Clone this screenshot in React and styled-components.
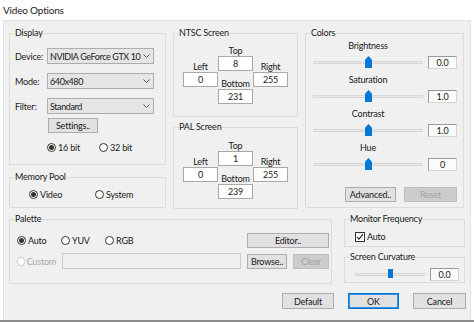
import React from 'react'
import styled, { createGlobalStyle } from 'styled-components'

// global

const GlobalStyle = createGlobalStyle`
  html, body {
    margin: 0;
    padding: 0;
    background: #fff;
  }
  body {
    font-family: Lato, "Noto Sans", sans-serif;
    font-size: 9px;
    letter-spacing: -0.2px;
    color: #1a1a1a;
  }
  * {
    box-sizing: border-box;
  }
`

// window

const Window = styled.div`
  position: relative;
  width: 474px;
  height: 322px;
  background: #fff;
  display: flex;
  flex-direction: column;
  overflow: hidden;
  border-bottom: 2px solid #8c8c8c;
`

const TitleBar = styled.div`
  height: 20px;
  padding-left: 3px;
  display: flex;
  align-items: center;
  font-size: 10px;
`

const Body = styled.div`
  flex: 1;
  margin: 0 3px;
  background: #f0f0f0;
  border: 1px solid #e2e2e2;
  border-bottom: none;
  padding: 6px 4px 0 5px;
`

const TopGrid = styled.div`
  display: grid;
  grid-template-columns: 157px 125px 159px;
  column-gap: 7px;
  align-items: start;
`

const BottomGrid = styled.div`
  display: grid;
  grid-template-columns: 323px 121px;
  column-gap: 12px;
  margin-top: 4px;
  align-items: start;
`

const Column = styled.div`
  display: flex;
  flex-direction: column;
  gap: ${p => p.$gap || 0}px;
`

const Footer = styled.div`
  display: flex;
  justify-content: flex-end;
  gap: 14px;
  margin-top: 9px;
`

// group boxes

const Group = styled.fieldset`
  margin: 0;
  padding: 0;
  min-width: 0;
  border: 1px solid #dcdcdc;
  height: ${p => p.$h}px;
`

const Legend = styled.legend`
  margin-left: 4px;
  padding: 0 1px;
  line-height: 12px;
`

const Content = styled.div`
  display: flex;
  flex-direction: column;
  gap: ${p => p.$gap || 0}px;
  padding: ${p => p.$pt || 0}px ${p => p.$pr || 0}px 0 ${p => p.$pl || 0}px;
`

const Row = styled.div`
  display: flex;
  align-items: center;
  gap: ${p => p.$gap || 0}px;
  margin-top: ${p => p.$mt || 0}px;
  padding-left: ${p => p.$pl || 0}px;
  height: ${p => (p.$h ? `${p.$h}px` : 'auto')};
`

const FieldLabel = styled.span`
  width: 32px;
  flex-shrink: 0;
`

const Combo = styled.div`
  width: 107px;
  height: 16px;
  background: #e5e5e5;
  border: 1px solid #adadad;
  display: flex;
  align-items: center;
  padding: 0 3px 0 2px;
`

const ComboText = styled.span`
  flex: 1;
  white-space: nowrap;
  overflow: hidden;
  letter-spacing: -0.4px;
`

const Button = styled.button`
  font: inherit;
  letter-spacing: inherit;
  color: ${p => (p.$disabled ? '#a3a3a3' : '#1a1a1a')};
  width: ${p => p.$w}px;
  height: ${p => p.$h || 15}px;
  padding: 0;
  margin-left: ${p => (p.$auto ? 'auto' : `${p.$ml || 0}px`)};
  background: ${p => (p.$disabled ? '#cccccc' : '#e1e1e1')};
  border: 1px solid ${p => (p.$focus ? '#0078d7' : p.$disabled ? '#bfbfbf' : '#adadad')};
  box-shadow: ${p => (p.$focus ? 'inset 0 0 0 1px #3c8fe0' : 'none')};
  display: flex;
  align-items: center;
  justify-content: center;
  flex-shrink: 0;
`

// radios and checks

const RadioItem = styled.span`
  display: inline-flex;
  align-items: center;
  gap: 2px;
  width: ${p => (p.$w ? `${p.$w}px` : 'auto')};
  flex-shrink: 0;
  color: ${p => (p.$disabled ? '#a8a8a8' : 'inherit')};
`

const RadioDot = styled.span`
  width: 9px;
  height: 9px;
  border-radius: 50%;
  border: 1px solid ${p => (p.$disabled ? '#cfcfcf' : '#333')};
  background: #fff;
  display: flex;
  align-items: center;
  justify-content: center;

  &::after {
    content: '';
    width: 5px;
    height: 5px;
    border-radius: 50%;
    background: #333;
    display: ${p => (p.$checked ? 'block' : 'none')};
  }
`

const CheckBox = styled.span`
  width: 10px;
  height: 10px;
  border: 1px solid #333;
  background: #fff;
  display: flex;
  align-items: center;
  justify-content: center;
`

const Radio = ({ label, checked, disabled, w }) => (
  <RadioItem $w={w} $disabled={disabled}>
    <RadioDot $checked={checked} $disabled={disabled} />
    {label}
  </RadioItem>
)

// screen boxes

const Cross = styled.div`
  display: flex;
  padding-left: 9px;
`

const CrossCol = styled.div`
  display: flex;
  flex-direction: column;
  align-items: center;
  margin-top: ${p => p.$mt || 0}px;
`

const SmallLabel = styled.span`
  line-height: 10px;
  margin-top: ${p => p.$mt || 0}px;
`

const NumBox = styled.div`
  width: 35px;
  height: 15px;
  background: #fff;
  border: 1px solid #a8a8a8;
  display: flex;
  align-items: center;
  justify-content: center;
`

// sliders

const SliderBlock = styled.div`
  display: flex;
  flex-direction: column;
  gap: 4px;
`

const SliderLabel = styled.span`
  width: 110px;
  text-align: center;
  line-height: 10px;
`

const Slider = styled.div`
  position: relative;
  width: ${p => p.$w}px;
  height: 14px;
  display: flex;
  align-items: center;
`

const Track = styled.div`
  width: 100%;
  height: 3px;
  background: #e7e7e7;
  border: 1px solid #d8d8d8;
`

const Thumb = styled.div`
  position: absolute;
  left: ${p => p.$pos}%;
  top: ${p => (p.$small ? 2 : 1)}px;
  width: ${p => (p.$small ? 5 : 7)}px;
  height: ${p => (p.$small ? 9 : 12)}px;
  margin-left: ${p => (p.$small ? -2 : -3)}px;
  background: #0078d7;
  clip-path: ${p =>
    p.$small ? 'none' : 'polygon(50% 0, 100% 32%, 100% 100%, 0 100%, 0 32%)'};
`

const ValueBox = styled.div`
  width: 29px;
  height: 13px;
  margin-left: 5px;
  background: #fbfbfb;
  border: 1px solid #9a9a9a;
  border-right-color: #d4d4d4;
  border-bottom-color: #d4d4d4;
  display: flex;
  align-items: center;
  justify-content: center;
`

const TextBox = styled.div`
  width: 179px;
  height: 16px;
  background: #f0f0f0;
  border: 1px solid #cccccc;
  margin-left: 6px;
`

const Chevron = () => (
  <svg width="7" height="4" viewBox="0 0 7 4">
    <path d="M0.5 0.5 L3.5 3.5 L6.5 0.5" fill="none" stroke="#555" strokeWidth="1" />
  </svg>
)

const ColorSlider = ({ label, value }) => (
  <SliderBlock>
    <SliderLabel>{label}</SliderLabel>
    <Row>
      <Slider $w={110}>
        <Track />
        <Thumb $pos={50} />
      </Slider>
      <ValueBox>{value}</ValueBox>
    </Row>
  </SliderBlock>
)

const ScreenBoxes = ({ top, left, right, bottom }) => (
  <Cross>
    <CrossCol $mt={16}>
      <SmallLabel>Left</SmallLabel>
      <NumBox>{left}</NumBox>
    </CrossCol>
    <CrossCol>
      <SmallLabel>Top</SmallLabel>
      <NumBox>{top}</NumBox>
      <SmallLabel $mt={8}>Bottom</SmallLabel>
      <NumBox>{bottom}</NumBox>
    </CrossCol>
    <CrossCol $mt={16}>
      <SmallLabel>Right</SmallLabel>
      <NumBox>{right}</NumBox>
    </CrossCol>
  </Cross>
)

// render
const App = () => {
  return (
    <>
      <GlobalStyle />
      <Window>
        <TitleBar>Video Options</TitleBar>
        <Body>
          <TopGrid>
            <Column $gap={6}>
              <Group $h={138}>
                <Legend>Display</Legend>
                <Content $pt={9} $pl={5} $gap={9}>
                  <Row>
                    <FieldLabel>Device:</FieldLabel>
                    <Combo>
                      <ComboText>NVIDIA GeForce GTX 10</ComboText>
                      <Chevron />
                    </Combo>
                  </Row>
                  <Row>
                    <FieldLabel>Mode:</FieldLabel>
                    <Combo>
                      <ComboText>640x480</ComboText>
                      <Chevron />
                    </Combo>
                  </Row>
                  <Row>
                    <FieldLabel>Filter:</FieldLabel>
                    <Combo>
                      <ComboText>Standard</ComboText>
                      <Chevron />
                    </Combo>
                  </Row>
                </Content>
                <Content $pt={4} $pl={5}>
                  <Row>
                    <Button $w={50} $ml={33}>Settings..</Button>
                  </Row>
                  <Row $mt={9} $pl={32} $h={11}>
                    <Radio label="16 bit" checked w={52} />
                    <Radio label="32 bit" />
                  </Row>
                </Content>
              </Group>
              <Group $h={37}>
                <Legend>Memory Pool</Legend>
                <Content $pt={6} $pl={19}>
                  <Row $h={11}>
                    <Radio label="Video" checked w={66} />
                    <Radio label="System" />
                  </Row>
                </Content>
              </Group>
            </Column>

            <Column $gap={4}>
              <Group $h={90}>
                <Legend>NTSC Screen</Legend>
                <Content $pt={7}>
                  <ScreenBoxes top="8" left="0" right="255" bottom="231" />
                </Content>
              </Group>
              <Group $h={88}>
                <Legend>PAL Screen</Legend>
                <Content $pt={8}>
                  <ScreenBoxes top="1" left="0" right="255" bottom="239" />
                </Content>
              </Group>
            </Column>

            <Group $h={181}>
              <Legend>Colors</Legend>
              <Content $pt={2} $pl={7} $gap={6}>
                <ColorSlider label="Brightness" value="0.0" />
                <ColorSlider label="Saturation" value="1.0" />
                <ColorSlider label="Contrast" value="1.0" />
                <ColorSlider label="Hue" value="0" />
                <Row $mt={10} $pl={32} $gap={8}>
                  <Button $w={51}>Advanced..</Button>
                  <Button $w={53} $disabled>Reset</Button>
                </Row>
              </Content>
            </Group>
          </TopGrid>

          <BottomGrid>
            <Group $h={71}>
              <Legend>Palette</Legend>
              <Content $pt={8} $pl={7} $pr={2} $gap={5}>
                <Row $h={15}>
                  <Radio label="Auto" checked w={44} />
                  <Radio label="YUV" w={44} />
                  <Radio label="RGB" />
                  <Button $w={82} $auto>Editor..</Button>
                </Row>
                <Row $h={16}>
                  <Radio label="Custom" disabled w={39} />
                  <TextBox />
                  <Button $w={40} $ml={6}>Browse..</Button>
                  <Button $w={36} $ml={6} $disabled>Clear</Button>
                </Row>
              </Content>
            </Group>

            <Column $gap={4}>
              <Group $h={34}>
                <Legend>Monitor Frequency</Legend>
                <Content $pt={6} $pl={10}>
                  <Row $gap={2}>
                    <CheckBox>
                      <svg width="8" height="8" viewBox="0 0 8 8">
                        <path d="M1 4 L3 6.2 L7 1.2" fill="none" stroke="#222" strokeWidth="1.1" />
                      </svg>
                    </CheckBox>
                    Auto
                  </Row>
                </Content>
              </Group>
              <Group $h={32}>
                <Legend>Screen Curvature</Legend>
                <Content $pt={4} $pl={10}>
                  <Row>
                    <Slider $w={70}>
                      <Track />
                      <Thumb $pos={50} $small />
                    </Slider>
                    <ValueBox>0.0</ValueBox>
                  </Row>
                </Content>
              </Group>
            </Column>
          </BottomGrid>

          <Footer>
            <Button $w={52} $h={16}>Default</Button>
            <Button $w={51} $h={16} $focus>OK</Button>
            <Button $w={53} $h={16}>Cancel</Button>
          </Footer>
        </Body>
      </Window>
    </>
  )
}

export default App
